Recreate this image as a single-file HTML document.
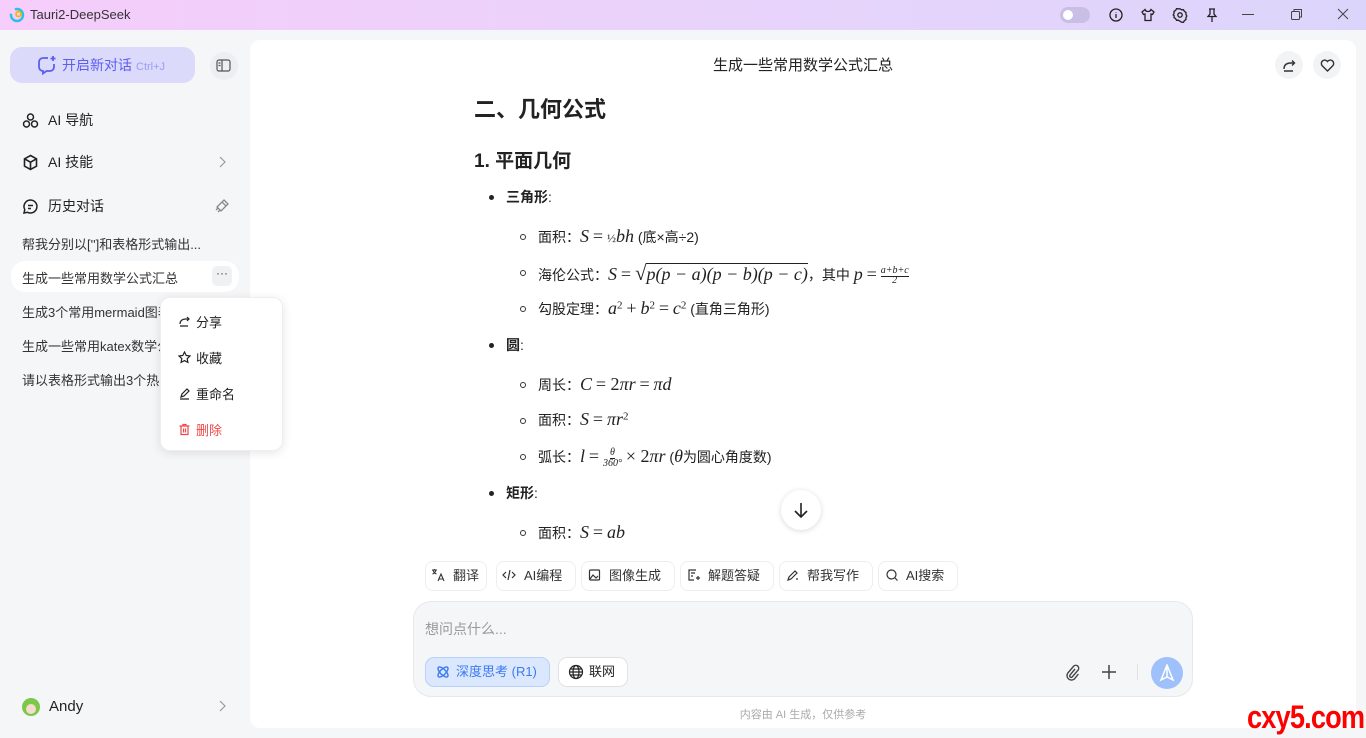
<!DOCTYPE html>
<html><head><meta charset="utf-8"><style>
*{margin:0;padding:0;box-sizing:border-box}
body{width:1366px;height:738px;overflow:hidden;background:#f5f6f8;font-family:"Liberation Sans","Noto Sans CJK SC",sans-serif;color:#222;position:relative}
.tb{position:absolute;left:0;top:0;width:1366px;height:30px;background:linear-gradient(90deg,#f6cdfb 0%,#e9d3fb 50%,#dcd5fb 100%)}
.tb .t{position:absolute;left:30px;top:7px;font-size:13px;color:#333}
.ab{position:absolute}
.side{position:absolute;left:0;top:30px;width:250px;height:708px}
.newc{position:absolute;left:10px;top:17px;width:185px;height:36px;border-radius:12px;background:#dcdafb;color:#5b5ef0;font-size:14px;line-height:36px;padding-left:52px}
.newc small{color:#9b9df5;font-size:11px;margin-left:4px}
.nav{position:absolute;left:22px;font-size:14px;color:#222;display:flex;align-items:center;gap:9px}
.hi{position:absolute;left:22px;font-size:13px;color:#333;white-space:nowrap}
.main{position:absolute;left:250px;top:40px;width:1106px;height:688px;background:#fff;border-radius:10px}
.ttl{position:absolute;left:0;width:1106px;top:14px;text-align:center;font-size:15px;color:#222}
.cbtn{position:absolute;top:11px;width:28px;height:28px;border-radius:50%;background:#f2f3f5;display:flex;align-items:center;justify-content:center}
.m{font-family:"Liberation Serif",serif;font-style:italic;font-size:18px}
.r{font-family:"Liberation Serif",serif;font-size:18px}
.ln{position:absolute;font-size:14px;color:#222;white-space:nowrap}
.b1{position:absolute;width:5px;height:5px;border-radius:50%;background:#222}
.b2{position:absolute;width:6px;height:6px;border-radius:50%;border:1px solid #333}
.chip{position:absolute;top:521px;height:30px;border:1px solid #eceef2;border-radius:8px;font-size:13px;line-height:28px;color:#333;padding-left:27px}
.inp{position:absolute;left:163px;top:561px;width:780px;height:96px;border:1px solid #e6e8ec;border-radius:18px;background:#f5f6f8}
.menu{position:absolute;left:160px;top:297px;width:123px;height:154px;background:#fff;border-radius:10px;box-shadow:0 2px 10px rgba(0,0,0,.1);border:1px solid #eee;z-index:10}
.menu div{position:absolute;left:17px;font-size:13px;display:flex;align-items:center;gap:5px}
</style></head><body>
<div class="tb">
<svg class="ab" style="left:9px;top:7px" width="16" height="16" viewBox="0 0 16 16"><circle cx="8" cy="8" r="6" fill="none" stroke="#27c0e8" stroke-width="2.4" stroke-dasharray="20 6"/><circle cx="9.5" cy="7" r="2.5" fill="none" stroke="#f7b500" stroke-width="1.8"/></svg>
<div class="t">Tauri2-DeepSeek</div>
<div class="ab" style="left:1060px;top:7px;width:30px;height:16px;border-radius:8px;background:#c9bfe4"><div style="position:absolute;left:3px;top:3px;width:10px;height:10px;border-radius:50%;background:#fff"></div></div>
<svg class="ab" style="left:1108px;top:7px" width="16" height="16" viewBox="0 0 16 16" fill="none" stroke="#222" stroke-width="1.3"><circle cx="8" cy="8" r="6"/><path d="M8 7v4M8 5v.5"/></svg>
<svg class="ab" style="left:1140px;top:7px" width="16" height="16" viewBox="0 0 16 16" fill="none" stroke="#222" stroke-width="1.3"><path d="M5 2.5L2 5l1.5 2.5L5 7v6.5h6V7l1.5.5L14 5l-3-2.5c-.5 1.5-1.5 2-3 2s-2.5-.5-3-2z"/></svg>
<svg class="ab" style="left:1172px;top:7px" width="16" height="16" viewBox="0 0 16 16" fill="none" stroke="#222" stroke-width="1.3"><circle cx="8" cy="8" r="2.2"/><path d="M8 1.8l1.6 1 1.9-.1.9 1.7 1.6 1-.1 1.9.9 1.7-.9 1.7.1 1.9-1.6 1-.9 1.7-1.9-.1L8 14.2l-1.6-1-1.9.1-.9-1.7-1.6-1 .1-1.9L1.2 8l.9-1.7-.1-1.9 1.6-1 .9-1.7 1.9.1z"/></svg>
<svg class="ab" style="left:1204px;top:7px" width="16" height="16" viewBox="0 0 16 16" fill="none" stroke="#222" stroke-width="1.3"><path d="M5 2h6M6 2v5L4 9.5h8L10 7V2M8 9.5V15"/></svg>
<div class="ab" style="left:1242px;top:14px;width:12px;height:1px;background:#444"></div>
<svg class="ab" style="left:1290px;top:8px" width="13" height="13" viewBox="0 0 13 13" fill="none" stroke="#444" stroke-width="1"><rect x="1.5" y="3.5" width="8" height="8" rx="1"/><path d="M4 3.5V1.5h7.5V9H9.5"/></svg>
<svg class="ab" style="left:1337px;top:8px" width="12" height="12" viewBox="0 0 12 12" stroke="#444" stroke-width="1"><path d="M1 1l10 10M11 1L1 11"/></svg>
</div>

<div class="side">
<div class="newc">开启新对话<small>Ctrl+J</small></div>
<svg class="ab" style="left:37px;top:25px" width="20" height="20" viewBox="0 0 20 20" fill="none" stroke="#5b5ef0" stroke-width="1.8"><path d="M11 3H6a4 4 0 0 0-4 4v5a4 4 0 0 0 4 4v2.5l3.5-2.5H13a4 4 0 0 0 4-4V9"/><path d="M16 1v5M13.5 3.5h5"/></svg>
<div class="ab" style="left:210px;top:22px;width:28px;height:28px;border-radius:50%;background:#eceef1"></div>
<svg class="ab" style="left:216px;top:29px" width="15" height="13" viewBox="0 0 15 13" fill="none" stroke="#555" stroke-width="1.2"><rect x="1" y="1" width="13" height="11" rx="2"/><path d="M6 1v11M2.5 4h2M2.5 6.5h2"/></svg>
<div class="nav" style="top:80px"><svg width="17" height="17" viewBox="0 0 17 17" fill="none" stroke="#222" stroke-width="1.5"><circle cx="8.5" cy="5" r="3"/><circle cx="4.5" cy="12" r="3"/><circle cx="12.5" cy="12" r="3"/></svg>AI 导航</div>
<div class="nav" style="top:122px"><svg width="17" height="17" viewBox="0 0 17 17" fill="none" stroke="#222" stroke-width="1.6"><path d="M8.5 1.5l6 3.3v7.4l-6 3.3-6-3.3V4.8z"/><path d="M2.5 4.8l6 3.4 6-3.4M8.5 8.2v7.3"/></svg>AI 技能</div>
<svg class="ab" style="left:218px;top:126px" width="8" height="12" viewBox="0 0 8 12" fill="none" stroke="#999" stroke-width="1.2"><path d="M2 1l5 5-5 5"/></svg>
<div class="nav" style="top:166px"><svg width="17" height="17" viewBox="0 0 17 17" fill="none" stroke="#222" stroke-width="1.5"><path d="M8.5 2a6.5 6.5 0 1 1-3 12.3L2 15l.8-3.4A6.5 6.5 0 0 1 8.5 2z"/><path d="M6 7.5h5M6 10.5h3"/></svg>历史对话</div>
<svg class="ab" style="left:214px;top:168px" width="16" height="16" viewBox="0 0 16 16" fill="none" stroke="#888" stroke-width="1.3"><path d="M10 2l4 4-2 2-4-4zM8 4L3 9l4 4 5-5M4 10l-2 2M6 12l-2 2"/></svg>
<div class="hi" style="top:204px">帮我分别以['']和表格形式输出...</div>
<div class="ab" style="left:11px;top:231px;width:228px;height:31px;border-radius:14px;background:#fff"></div>
<div class="hi" style="top:238px">生成一些常用数学公式汇总</div>
<div class="ab" style="left:212px;top:236px;width:20px;height:20px;border-radius:5px;background:#f0f1f3;font-size:12px;text-align:center;line-height:14px;color:#444">···</div>
<div class="hi" style="top:272px">生成3个常用mermaid图表</div>
<div class="hi" style="top:306px">生成一些常用katex数学公式</div>
<div class="hi" style="top:340px">请以表格形式输出3个热门</div>
<div class="ab" style="left:22px;top:668px;width:18px;height:18px;border-radius:50%;background:#7cc84a"><div style="position:absolute;left:4px;top:6px;width:10px;height:10px;border-radius:50%;background:#f6dccf"></div></div>
<div class="ab" style="left:49px;top:668px;font-size:15px;color:#222">Andy</div>
<svg class="ab" style="left:218px;top:670px" width="8" height="12" viewBox="0 0 8 12" fill="none" stroke="#999" stroke-width="1.2"><path d="M2 1l5 5-5 5"/></svg>
</div>

<div class="main">
<div class="ttl">生成一些常用数学公式汇总</div>
<div class="cbtn" style="left:1025px"><svg width="15" height="15" viewBox="0 0 15 15" fill="none" stroke="#333" stroke-width="1.4"><path d="M2 13h9M2 11c0-4 2.5-6 7-6h3M10 2.5l2.5 2.5L10 7.5"/></svg></div>
<div class="cbtn" style="left:1063px"><svg width="15" height="15" viewBox="0 0 15 15" fill="none" stroke="#333" stroke-width="1.4"><path d="M7.5 13L2 7.5a3 3 0 0 1 5.5-4 3 3 0 0 1 5.5 4z"/></svg></div>

<div class="ln" style="left:224px;top:52px;font-size:22px;font-weight:bold">二、几何公式</div>
<div class="ln" style="left:224px;top:106px;font-size:19px;font-weight:bold">1. 平面几何</div>
<div class="b1" style="left:239px;top:155px"></div><div class="ln" style="left:256px;top:147px"><b>三角形</b>:</div>
<div class="b2" style="left:270px;top:194px"></div><div class="ln" style="left:288px;top:186px">面积：<span class="m">S</span> <span class="r">=</span> <span class="r" style="font-size:12px">½</span><span class="m">bh</span>&nbsp;(底×高÷2)</div>
<div class="b2" style="left:270px;top:230px"></div><div class="ln" style="left:288px;top:221px">海伦公式：<span class="m">S</span> <span class="r">=</span> <span class="r" style="font-size:21px">√</span><span class="m" style="border-top:1px solid #222">p(p − a)(p − b)(p − c)</span>，其中 <span class="m">p</span> <span class="r">=</span> <span class="m" style="font-size:10px;display:inline-block;text-align:center;line-height:10px;vertical-align:middle"><span style="border-bottom:1px solid #222">a+b+c</span><br>2</span></div>
<div class="b2" style="left:270px;top:266px"></div><div class="ln" style="left:288px;top:258px">勾股定理：<span class="m">a</span><sup class="r" style="font-size:11px">2</sup> <span class="r">+</span> <span class="m">b</span><sup class="r" style="font-size:11px">2</sup> <span class="r">=</span> <span class="m">c</span><sup class="r" style="font-size:11px">2</sup>&nbsp;(直角三角形)</div>
<div class="b1" style="left:239px;top:303px"></div><div class="ln" style="left:256px;top:295px"><b>圆</b>:</div>
<div class="b2" style="left:270px;top:342px"></div><div class="ln" style="left:288px;top:334px">周长：<span class="m">C</span> <span class="r">= 2</span><span class="m">πr</span> <span class="r">=</span> <span class="m">πd</span></div>
<div class="b2" style="left:270px;top:378px"></div><div class="ln" style="left:288px;top:369px">面积：<span class="m">S</span> <span class="r">=</span> <span class="m">πr</span><sup class="r" style="font-size:11px">2</sup></div>
<div class="b2" style="left:270px;top:414px"></div><div class="ln" style="left:288px;top:406px">弧长：<span class="m">l</span> <span class="r">=</span> <span class="m" style="font-size:10px;display:inline-block;text-align:center;line-height:10px;vertical-align:middle"><span style="border-bottom:1px solid #222;display:inline-block">θ</span><br>360°</span> <span class="r">× 2</span><span class="m">πr</span>&nbsp;(<span class="m">θ</span>为圆心角度数)</div>
<div class="b1" style="left:239px;top:451px"></div><div class="ln" style="left:256px;top:443px"><b>矩形</b>:</div>
<div class="b2" style="left:270px;top:490px"></div><div class="ln" style="left:288px;top:482px">面积：<span class="m">S</span> <span class="r">=</span> <span class="m">ab</span></div>
<div class="ab" style="left:531px;top:450px;width:40px;height:40px;border-radius:50%;background:#fff;box-shadow:0 1px 6px rgba(0,0,0,.15)"><svg style="position:absolute;left:12px;top:11px" width="16" height="18" viewBox="0 0 16 18" fill="none" stroke="#222" stroke-width="1.6"><path d="M8 2v14M2 10l6 6 6-6"/></svg></div>

<div class="chip" style="left:175px;width:62px">翻译</div>
<div class="chip" style="left:246px;width:80px">AI编程</div>
<div class="chip" style="left:331px;width:94px">图像生成</div>
<div class="chip" style="left:430px;width:94px">解题答疑</div>
<div class="chip" style="left:529px;width:94px">帮我写作</div>
<div class="chip" style="left:628px;width:80px">AI搜索</div>
<svg class="ab" style="left:181px;top:528px" width="14" height="14" viewBox="0 0 14 14" fill="none" stroke="#333" stroke-width="1.1"><path d="M1 2h5M3.5 1v1M2 2c.5 2 2 3.5 3.5 4M5 2c-.5 2-2 3.5-3.5 4M7 13l3-7 3 7M8 11h4"/></svg>
<svg class="ab" style="left:252px;top:528px" width="14" height="14" viewBox="0 0 14 14" fill="none" stroke="#333" stroke-width="1.2"><path d="M4 4L1 7l3 3M10 4l3 3-3 3M8 2L6 12"/></svg>
<svg class="ab" style="left:338px;top:528px" width="14" height="14" viewBox="0 0 14 14" fill="none" stroke="#333" stroke-width="1.2"><rect x="1.5" y="2" width="10" height="10" rx="1"/><path d="M2 11l3-4 3 3 2-2"/></svg>
<svg class="ab" style="left:437px;top:528px" width="14" height="14" viewBox="0 0 14 14" fill="none" stroke="#333" stroke-width="1.2"><path d="M9 2H2v10h5M4 5h4M4 8h2M11 8v4M9 10h4"/></svg>
<svg class="ab" style="left:536px;top:528px" width="14" height="14" viewBox="0 0 14 14" fill="none" stroke="#333" stroke-width="1.2"><path d="M2 12l1-3 6-6 2 2-6 6zM10 11h2"/></svg>
<svg class="ab" style="left:635px;top:528px" width="14" height="14" viewBox="0 0 14 14" fill="none" stroke="#333" stroke-width="1.2"><circle cx="6.5" cy="6.5" r="4.5"/><path d="M10 10l2.5 2.5"/></svg>

<div class="inp">
<div class="ab" style="left:11px;top:17px;font-size:14px;color:#999">想问点什么...</div>
<div class="ab" style="left:11px;top:55px;width:125px;height:30px;border-radius:9px;background:#dbe7fd;border:1px solid #b9d0fa;color:#3b7bf0;font-size:13px;line-height:28px;padding-left:30px">深度思考 (R1)</div>
<svg class="ab" style="left:21px;top:62px" width="16" height="16" viewBox="0 0 16 16" fill="none" stroke="#3b7bf0" stroke-width="1.4"><ellipse cx="8" cy="8" rx="6.5" ry="2.8" transform="rotate(45 8 8)"/><ellipse cx="8" cy="8" rx="6.5" ry="2.8" transform="rotate(-45 8 8)"/></svg>
<div class="ab" style="left:144px;top:55px;width:70px;height:30px;border-radius:9px;background:#fff;border:1px solid #e0e2e6;font-size:13px;line-height:28px;padding-left:30px;color:#222">联网</div>
<svg class="ab" style="left:154px;top:62px" width="16" height="16" viewBox="0 0 16 16" fill="none" stroke="#222" stroke-width="1.2"><circle cx="8" cy="8" r="6.5"/><ellipse cx="8" cy="8" rx="3" ry="6.5"/><path d="M1.5 8h13M2.5 5h11M2.5 11h11"/></svg>
<svg class="ab" style="left:650px;top:61px" width="16" height="18" viewBox="0 0 16 18" fill="none" stroke="#444" stroke-width="1.4"><path d="M11 6l-5 6a1.5 1.5 0 0 0 2.2 2l6-7a3 3 0 0 0-4.4-4l-6 7a4.5 4.5 0 0 0 6.6 6l4-5"/></svg>
<svg class="ab" style="left:687px;top:62px" width="16" height="16" viewBox="0 0 16 16" stroke="#444" stroke-width="1.5"><path d="M8 1v14M1 8h14"/></svg>
<div class="ab" style="left:723px;top:62px;width:1px;height:16px;background:#e0e0e0"></div>
<div class="ab" style="left:737px;top:55px;width:32px;height:32px;border-radius:50%;background:#9ec0fb"><svg style="position:absolute;left:8px;top:7px" width="16" height="18" viewBox="0 0 16 18" fill="none" stroke="#fff" stroke-width="1.5"><path d="M8 1L2 16l6-3 6 3zM8 1v12"/></svg></div>
</div>
<div class="ab" style="left:0;width:1106px;top:666px;text-align:center;font-size:11px;color:#aaa">内容由 AI 生成，仅供参考</div>
</div>

<div class="menu">
<div style="top:14px"><svg width="13" height="13" viewBox="0 0 13 13" fill="none" stroke="#222" stroke-width="1.2"><path d="M2 11h8M2 9c0-3 2-5 6-5h3M9 2l2 2-2 2"/></svg>分享</div>
<div style="top:50px"><svg width="13" height="13" viewBox="0 0 13 13" fill="none" stroke="#222" stroke-width="1.2"><path d="M6.5 1l1.7 3.5 3.8.5-2.8 2.6.7 3.8-3.4-1.8-3.4 1.8.7-3.8L1 5l3.8-.5z"/></svg>收藏</div>
<div style="top:86px"><svg width="13" height="13" viewBox="0 0 13 13" fill="none" stroke="#222" stroke-width="1.2"><path d="M2 12h9M3 10l1-3 5-5 2 2-5 5z"/></svg>重命名</div>
<div style="top:122px;color:#f04848"><svg width="13" height="13" viewBox="0 0 13 13" fill="none" stroke="#f04848" stroke-width="1.2"><path d="M1.5 3h10M5 3V1.5h3V3M3 3v8.5h7V3M5.5 5.5v4M7.5 5.5v4"/></svg>删除</div>
</div>
<div class="ab" style="left:1247px;top:699px;font-family:'Liberation Sans',sans-serif;font-weight:bold;font-size:32px;color:#f00;letter-spacing:-1px;transform:scaleX(.85);transform-origin:left">cxy5.com</div>
</body></html>
